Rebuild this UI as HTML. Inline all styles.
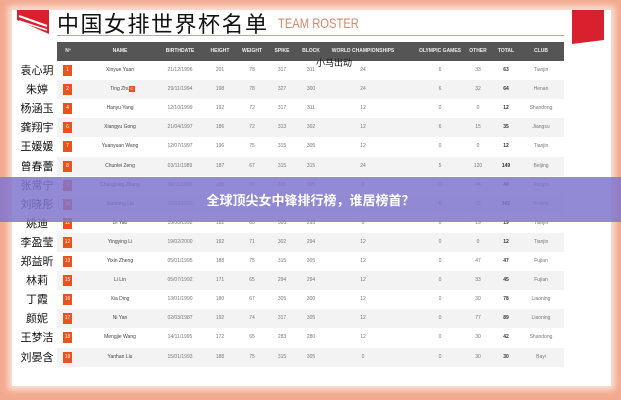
<!DOCTYPE html>
<html><head><meta charset="utf-8"><style>
*{margin:0;padding:0;box-sizing:border-box}
body{width:621px;height:400px;overflow:hidden;background:#f2a98e;font-family:"Liberation Sans","Noto Sans CJK SC",sans-serif;position:relative}
.inner{position:absolute;left:12px;top:10px;width:599px;height:376px;background:#fff;box-shadow:0 0 6px 4px #fbe1d6}
.abs{position:absolute}
.title{left:57px;top:8px;font-size:22px;color:#111;letter-spacing:1.5px;font-family:"Noto Sans CJK SC",sans-serif;line-height:30px}
.tr{left:278px;top:14px;font-size:14px;color:#d48a6a;transform:scaleX(0.8);transform-origin:left;line-height:18px}
.ul{left:57px;top:35px;width:507px;height:1px;background:#b8aa9a}
.hdr{left:57px;top:42px;width:507px;height:19px;background:#555}
.row{position:absolute;left:57px;width:507px;height:19px}
.c{position:absolute;top:0;line-height:19px;font-size:5px;color:#777;transform:translateX(-50%);white-space:nowrap}
.h{color:#eee;font-weight:bold;font-size:5px}
.badge{position:absolute;left:6px;top:4px;width:9px;height:11px;background:#e8531e;color:#fff;font-size:5px;line-height:11px;text-align:center}
.cn{position:absolute;left:-38px;width:36px;text-align:center;font-size:11px;color:#111;line-height:19px;font-family:"Noto Sans CJK SC",sans-serif}
.band{left:0;top:177px;width:621px;height:45px;background:rgba(128,118,206,0.85)}
.bt{left:0;top:177px;width:621px;line-height:45px;text-align:center;color:#fff;font-weight:bold;font-size:13px;font-family:"Noto Sans CJK SC",sans-serif}
</style></head><body>
<div class="inner"></div>
<svg class="abs" style="left:17px;top:10px" width="32" height="24"><polygon points="0,0 32,0 32,24 0,10" fill="#d8202e"/><polyline points="2,6 30,16" stroke="#fff" stroke-width="2"/><polyline points="2,11 30,20" stroke="#fff" stroke-width="1.5"/></svg>
<svg class="abs" style="left:572px;top:10px" width="34" height="34"><polygon points="0,0 32,0 32,30 0,34" fill="#d8202e"/></svg>
<div class="abs title">中国女排世界杯名单</div>
<div class="abs tr">TEAM ROSTER</div>
<div class="abs ul"></div>
<div class="abs hdr"></div>
<div id="t"></div>
<div class="abs" style="left:316px;top:56px;font-size:9px;color:#111;font-family:'Noto Sans CJK SC',sans-serif">小马出动</div>
<div class="abs band"></div>
<div class="abs bt">全球顶尖女中锋排行榜，谁居榜首？</div>
<script>
var cols=[11,63,123,163,195,225,254,306,383,421,449,484];
var hd=["Nº","NAME","BIRTHDATE","HEIGHT","WEIGHT","SPIKE","BLOCK","WORLD CHAMPIONSHIPS","OLYMPIC GAMES","OTHER","TOTAL","CLUB"];
var d=[["袁心玥","1","Xinyue Yuan","21/12/1996","201","78","317","311","24","6","33","63","Tianjin"],
["朱婷","2","Ting Zhu","29/11/1994","198","78","327","300","24","6","32","64","Henan"],
["杨涵玉","4","Hanyu Yang","12/10/1999","192","72","317","311","12","0","0","12","Shandong"],
["龚翔宇","6","Xiangyu Gong","21/04/1997","186","72","313","302","12","6","15","35","Jiangsu"],
["王媛媛","7","Yuanyuan Wang","12/07/1997","196","75","315","305","12","0","0","12","Tianjin"],
["曾春蕾","8","Chunlei Zeng","03/11/1989","187","67","315","315","24","5","120","149","Beijing"],
["张常宁","9","Changning Zhang","06/11/1995","195","80","315","305","0","0","44","44","Jiangsu"],
["刘晓彤","10","Xiaotong Liu","16/02/1990","188","70","315","305","24","6","72","102","Beijing"],
["姚迪","11","Di Yao","15/08/1992","182","65","305","295","0","0","19","19","Tianjin"],
["李盈莹","12","Yingying Li","19/02/2000","192","71","302","294","12","0","0","12","Tianjin"],
["郑益昕","13","Yixin Zheng","05/01/1995","188","75","315","305","12","0","47","47","Fujian"],
["林莉","15","Li Lin","05/07/1992","171","65","294","294","12","0","33","45","Fujian"],
["丁霞","16","Xia Ding","13/01/1990","180","67","305","300","12","0","30","78","Liaoning"],
["颜妮","17","Ni Yan","02/03/1987","192","74","317","305","12","0","77","89","Liaoning"],
["王梦洁","18","Mengjie Wang","14/11/1995","172","65","283","280","12","0","30","42","Shandong"],
["刘晏含","19","Yanhan Liu","15/01/1993","188","75","315","305","0","0","30","30","Bayi"]];
var h='<div class="row" style="top:42px">';
hd.forEach(function(x,i){h+='<div class="c h" style="left:'+cols[i]+'px">'+x+'</div>'});
h+='</div>';
d.forEach(function(r,k){
 var top=61+k*19.1;
 h+='<div class="row" style="top:'+top+'px;background:'+(k%2?'#f3f3f3':'#fff')+'"><div class="cn">'+r[0]+'</div><div class="badge">'+r[1]+'</div>';
 for(var i=2;i<r.length;i++){var j=i-1;h+='<div class="c" style="left:'+cols[j]+'px;'+(j==1?'color:#444;':'')+(j==10?'color:#333;font-weight:bold;':'')+'">'+r[i]+'</div>';}
 if(k==1)h+='<div class="badge" style="left:72px;width:6px;height:6px;top:6px;font-size:4px;line-height:6px">C</div>';
 h+='</div>';
});
document.getElementById('t').innerHTML=h;
</script>
</body></html>
